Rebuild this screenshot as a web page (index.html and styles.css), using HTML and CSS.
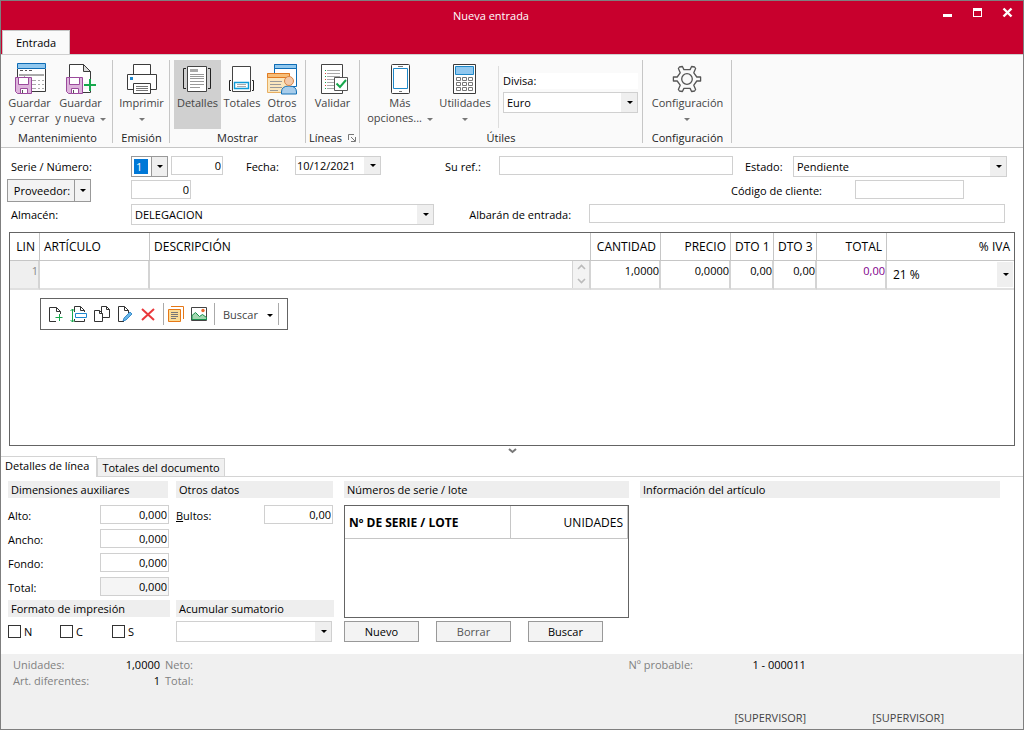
FILE: index.html
```html
<!DOCTYPE html>
<html lang="es">
<head>
<meta charset="utf-8">
<title>Nueva entrada</title>
<link rel="stylesheet" href="styles.css">
</head>
<body>
<div class="window">
  <header class="titlebar">
    <h1 class="title">Nueva entrada</h1>
    <div class="window-buttons">
      <button class="win-btn" aria-label="Minimizar"><svg width="11" height="11"><path d="M1 7h9v3H1z" fill="#fff"/></svg></button>
      <button class="win-btn" aria-label="Maximizar"><svg width="11" height="11" shape-rendering="crispEdges"><path d="M1 1h9v9H1zM2 4v5h7V4z" fill="#fff" fill-rule="evenodd"/></svg></button>
      <button class="win-btn" aria-label="Cerrar"><svg width="11" height="11"><path d="M1.500 1.500l8 8M9.500 1.500l-8 8" stroke="#fff" stroke-width="2.400"/></svg></button>
    </div>
    <button class="ribbon-tab">Entrada</button>
  </header>

  <div class="ribbon">
    <section class="group group-keep">
      <div class="tools">
        <button class="tool">
          <svg class="icon" viewBox="0 0 34 34"><path d="M4.500 8v22.500h28V8" fill="#fff" stroke="#3b3b3b"/><path d="M4.500 2.500h28v5h-28z" fill="#91c8ef" stroke="#0f6cb5"/><path d="M7 9.500h3m2 0h2m2 0h3" stroke="#555"/><path d="M6 13.500h25M6 14.500h25M11.500 13v6M19 19.500h4m2 0h2m2 0h2M19 23.500h4m2 0h2m2 0h2M19 27.500h4m2 0h2m2 0h2" stroke="#aaa"/><path d="M2.500 16.500h16v16h-14l-2-2z" fill="#deb5dc" stroke="#9b4a9c"/><path d="M5.500 16.500h10v7h-10zM7.500 27.500h7v5h-7z" fill="#fff" stroke="#9b4a9c"/><path d="M9.500 29v3" stroke="#555"/></svg>
          <span>Guardar<br>y cerrar</span>
        </button>
        <button class="tool">
          <svg class="icon" viewBox="0 0 34 34"><path d="M5.500 3.500h14l7 7v21h-21z" fill="#fff" stroke="#3b3b3b"/><path d="M19.500 3.500v7h7z" fill="#ddd" stroke="#3b3b3b"/><path d="M2.500 16.500h16v16h-14l-2-2z" fill="#deb5dc" stroke="#9b4a9c"/><path d="M5.500 16.500h10v7h-10zM7.500 27.500h7v5h-7z" fill="#fff" stroke="#9b4a9c"/><path d="M9.500 29v3" stroke="#555"/><path d="M19 21h14v7H19z" fill="#fafafa"/><path d="M20 24h12M26 18v12" stroke="#17a84c" stroke-width="2"/></svg>
          <span>Guardar<br>y nueva <i class="caret"></i></span>
        </button>
      </div>
      <h2 class="group-title">Mantenimiento</h2>
    </section>
    <section class="group group-print">
      <div class="tools">
        <button class="tool">
          <svg class="icon" viewBox="0 0 34 34"><path d="M8.500 3.500h17v11h-17z" fill="#fff" stroke="#3b3b3b"/><path d="M2.500 13.500h29v15h-29z" fill="#fff" stroke="#3b3b3b"/><path d="M5 16h3v3H5z" fill="#1e88d0"/><path d="M8.500 22.500h17v10h-17z" fill="#fff" stroke="#3b3b3b"/><path d="M11 25.500h12M11 27.500h12M11 29.500h12" stroke="#777"/></svg>
          <span>Imprimir<br><i class="caret caret-alone"></i></span>
        </button>
      </div>
      <h2 class="group-title">Emisión</h2>
    </section>
    <section class="group group-show">
      <div class="tools">
        <button class="tool tool-on" aria-pressed="true">
          <svg class="icon" viewBox="0 0 34 34"><path d="M5 7.500H2.500v20H5M27 7.500h2.500v20H27" fill="none" stroke="#222"/><path d="M6.500 5.500h19v25h-19z" fill="#fff" stroke="#444"/><path d="M9 8h8v3H9z" fill="#aaa"/><path d="M9 13.500h14M9 15.500h14M9 17.500h14M9 20.500h14M9 23.500h14M9 26.500h10" stroke="#999"/></svg>
          <span>Detalles</span>
        </button>
        <button class="tool">
          <svg class="icon" viewBox="0 0 34 34"><path d="M7.500 5.500h18v25h-18z" fill="#fff" stroke="#444"/><path d="M6 19.500H4.500v10H6M27 19.500h1.500v10H27" fill="none" stroke="#222"/><path d="M9.500 21.500h14v6h-14z" fill="#fff" stroke="#109bd8" stroke-width="1.400"/><path d="M12 23.500h9M12 25.500h9" stroke="#aaa"/></svg>
          <span>Totales</span>
        </button>
        <button class="tool">
          <svg class="icon" viewBox="0 0 34 34"><path d="M9.500 3.500h22v22h-22z" fill="#fff" stroke="#0f6cb5"/><path d="M9.500 3.500h22v4h-22z" fill="#91c8ef" stroke="#0f6cb5"/><path d="M2.500 12.500h22v19h-22z" fill="#fae6bd" stroke="#e7ae62"/><path d="M2.500 12.500h22v4h-22z" fill="#f7be78" stroke="#e07a22"/><path d="M5 20.500h12M5 23.500h11M5 26.500h12M5 29.500h8" stroke="#999"/><path d="M16.500 33v-2q0-6 7.500-6t7.500 6v2z" fill="#a8cdeb" stroke="#1470b5"/><circle cx="24" cy="20" r="4.500" fill="#f3c9a9" stroke="#d98648"/></svg>
          <span>Otros<br>datos</span>
        </button>
      </div>
      <h2 class="group-title">Mostrar</h2>
    </section>
    <section class="group group-lines">
      <div class="tools">
        <button class="tool">
          <svg class="icon" viewBox="0 0 34 34"><path d="M5.500 3.500h21v29h-21z" fill="#fff" stroke="#444"/><path d="M11 9.500h13M11 12.500h13M11 15.500h13M11 18.500h8M11 21.500h8M11 24.500h8M11 27.500h8" stroke="#aaa"/><path d="M9.500 12v1m0 5v1m0 5v1" stroke="#d43"/><path d="M9.500 9v1m0 5v1m0 5v1m0 5v1" stroke="#17a84c"/><path d="M18.500 16.500h13v13h-13z" fill="#fff" stroke="#555"/><path d="M20.500 22.500l3.500 3.500 6-7" fill="none" stroke="#17a84c" stroke-width="2"/></svg>
          <span>Validar</span>
        </button>
      </div>
      <h2 class="group-title">Líneas <svg class="launcher" viewBox="0 0 8 8"><path d="M.5 6V.5H6M3 3l4 4M7.500 3v4.500H3" fill="none" stroke="#777"/></svg></h2>
    </section>
    <section class="group group-utils">
      <div class="tools">
        <button class="tool">
          <svg class="icon" viewBox="0 0 34 34"><rect x="8.500" y="3.500" width="18" height="29" rx="1" fill="#fff" stroke="#3b3b3b"/><path d="M10.500 7.500h14v20h-14z" fill="#fff" stroke="#1e88c8"/><path d="M15 5.500h5M16 30.500h3" stroke="#777"/></svg>
          <span>Más<br>opciones... <i class="caret"></i></span>
        </button>
        <button class="tool">
          <svg class="icon" viewBox="0 0 34 34"><path d="M5.500 3.500h22v29h-22z" fill="#fff" stroke="#3b3b3b"/><path d="M7.500 5.500h18v8h-18z" fill="#91c8ef" stroke="#1e88c8"/><path d="M8.500 16.500h4v3h-4zM14.500 16.500h4v3h-4zM20.500 16.500h4v3h-4zM8.500 21.500h4v3h-4zM14.500 21.500h4v3h-4zM20.500 21.500h4v3h-4zM8.500 26.500h4v3h-4zM14.500 26.500h4v3h-4zM20.500 26.500h4v3h-4z" fill="none" stroke="#777"/></svg>
          <span>Utilidades<br><i class="caret caret-alone"></i></span>
        </button>
        <div class="currency">
          <label for="divisa">Divisa:</label>
          <span class="combo"><select id="divisa"><option>Euro</option></select></span>
        </div>
      </div>
      <h2 class="group-title">Útiles</h2>
    </section>
    <section class="group group-config">
      <div class="tools">
        <button class="tool">
          <svg class="icon" viewBox="0 0 34 34"><path d="M8.400 7.500 9.400 6 12.400 5.500 13.900 8.600H20.100L21.600 5.500 24.600 6 25.600 7.500 23.800 11.800 26.800 16H30.600V20H26.800L23.800 24.200 25.600 28.500 24.600 30 21.600 30.500 20.100 27.400H13.900L12.400 30.500 9.400 30 8.400 28.500 10.200 24.200 7.200 20H3.400V16H7.200L10.200 11.800Z" fill="none" stroke="#555" stroke-width="1.300" stroke-linejoin="round"/><circle cx="17" cy="18" r="5.300" fill="none" stroke="#555" stroke-width="1.300"/></svg>
          <span>Configuración<br><i class="caret caret-alone"></i></span>
        </button>
      </div>
      <h2 class="group-title">Configuración</h2>
    </section>
  </div>

  <form class="form">
    <div class="row">
      <label class="lead" for="serie">Serie / Número:</label>
      <span class="combo combo-focus serie"><select id="serie"><option>1</option></select><mark class="picked" aria-hidden="true">1</mark></span>
      <input class="field numero" aria-label="Número" value="0">
      <label class="fecha-label" for="fecha">Fecha:</label>
      <span class="combo fecha"><select id="fecha"><option>10/12/2021</option></select></span>
      <label class="ref-label" for="ref">Su ref.:</label>
      <input class="field ref" id="ref">
      <label class="estado-label" for="estado">Estado:</label>
      <span class="combo estado"><select id="estado"><option>Pendiente</option></select></span>
    </div>
    <div class="row">
      <div class="split"><button type="button">Proveedor:</button><button type="button" aria-label="Opciones de proveedor"><i class="caret caret-dark"></i></button></div>
      <input class="field proveedor" aria-label="Proveedor" value="0">
      <label class="cliente-label" for="cliente">Código de cliente:</label>
      <input class="field cliente" id="cliente">
    </div>
    <div class="row">
      <label class="lead" for="almacen">Almacén:</label>
      <span class="combo almacen"><select id="almacen"><option>DELEGACION</option></select></span>
      <label class="albaran-label" for="albaran">Albarán de entrada:</label>
      <input class="field albaran" id="albaran">
    </div>
  </form>

  <main class="lines">
    <table class="grid">
      <colgroup><col class="c-lin"><col class="c-art"><col><col class="c-num"><col class="c-num"><col class="c-dto"><col class="c-dto"><col class="c-num"><col class="c-iva"></colgroup>
      <thead><tr><th class="num">LIN</th><th>ARTÍCULO</th><th>DESCRIPCIÓN</th><th class="num">CANTIDAD</th><th class="num">PRECIO</th><th class="num">DTO 1</th><th class="num">DTO 3</th><th class="num">TOTAL</th><th class="num">% IVA</th></tr></thead>
      <tbody><tr><td class="num line-no">1</td><td></td><td class="desc"><div class="scroller"><svg width="9" height="22" viewBox="0 0 9 22"><path d="M1 6l3.500-3.500L8 6M1 16l3.500 3.500L8 16" fill="none" stroke="#bbb" stroke-width="1.600"/></svg></div></td><td class="num">1,0000</td><td class="num">0,0000</td><td class="num">0,00</td><td class="num">0,00</td><td class="num total">0,00</td><td class="iva"><span class="combo combo-cell"><select aria-label="% IVA"><option>21 %</option></select></span></td></tr></tbody>
    </table>
    <div class="toolbar">
      <button class="mini" aria-label="Nueva línea"><svg viewBox="0 0 18 18"><path d="M13.500 9V6.500l-4-4h-7v14H9" fill="#fff" stroke="#333"/><path d="M9.500 2.500v4h4" fill="none" stroke="#333"/><path d="M8.500 12.500h7M12.500 9v7" stroke="#17a84c"/></svg></button>
      <button class="mini" aria-label="Insertar línea"><svg viewBox="0 0 18 18"><path d="M4.500 7V1.500h6l4 4V7M4.500 14v2.500h10V14" fill="#fff" stroke="#333"/><path d="M10.500 1.500v4h4" fill="none" stroke="#333"/><path d="M5.500 8.500h11v4h-11z" fill="#fff" stroke="#1e88d0"/><path d="M2.500 4v13M.5 6l2-2 2 2M.5 15l2 2 2-2" fill="none" stroke="#17a84c"/></svg></button>
      <button class="mini" aria-label="Duplicar"><svg viewBox="0 0 18 18"><path d="M8.500 1.500h5l3 3v8h-8z" fill="#fff" stroke="#333"/><path d="M13.500 1.500v3h3" fill="none" stroke="#333"/><path d="M1.500 5.500h5l3 3v8h-8z" fill="#fff" stroke="#333"/><path d="M6.500 5.500v3h3" fill="none" stroke="#333"/></svg></button>
      <button class="mini" aria-label="Modificar"><svg viewBox="0 0 18 18"><path d="M12.500 8V5.500l-4-4h-6v15H8" fill="#fff" stroke="#333"/><path d="M8.500 1.500v4h4" fill="none" stroke="#333"/><path d="M7 16l1-3 6-6 2 2-6 6z" fill="#67b5e8" stroke="#1e78c0" stroke-width=".8"/></svg></button>
      <button class="mini" aria-label="Borrar línea"><svg viewBox="0 0 18 18"><path d="M3 4l12 11M15 4L3 15" stroke="#e9383b" stroke-width="2"/></svg></button>
      <i class="divider"></i>
      <button class="mini" aria-label="Notas"><svg viewBox="0 0 18 18"><path d="M4 1.500h12.500V14" fill="none" stroke="#e67817"/><path d="M1.500 4.500h12v12h-12z" fill="#fbdc95" stroke="#e67817"/><path d="M4 7.500h7M4 9.500h7M4 11.500h7M4 13.500h5" stroke="#777"/></svg></button>
      <button class="mini" aria-label="Imagen"><svg viewBox="0 0 18 18"><path d="M1.500 2.500h15v13h-15z" fill="#fff" stroke="#444"/><path d="M2 14.500v-4l3.500-3 4 4 3-2 4 3v2z" fill="#a3d7b1" stroke="#17914c"/><circle cx="13" cy="5.500" r="1.700" fill="#e9682b"/></svg></button>
      <i class="divider"></i>
      <button class="find">Buscar <i class="caret caret-dark"></i></button>
      <i class="divider"></i>
    </div>
  </main>

  <div class="splitter"><svg width="9" height="6" viewBox="0 0 9 6"><path d="M1 1l3.500 3L8 1" fill="none" stroke="#777" stroke-width="2"/></svg></div>

  <nav class="tabs"><button class="tab tab-on">Detalles de línea</button><button class="tab">Totales del documento</button></nav>

  <div class="details">
    <section class="dims">
      <h3 class="caption">Dimensiones auxiliares</h3>
      <div class="rows">
        <label for="alto">Alto:</label><input class="field" id="alto" value="0,000">
        <label for="ancho">Ancho:</label><input class="field" id="ancho" value="0,000">
        <label for="fondo">Fondo:</label><input class="field" id="fondo" value="0,000">
        <label for="tot">Total:</label><input class="field readonly" id="tot" value="0,000" readonly>
      </div>
      <h3 class="caption">Formato de impresión</h3>
      <div class="checks"><label><input type="checkbox">N</label><label><input type="checkbox">C</label><label><input type="checkbox">S</label></div>
    </section>
    <section class="others">
      <h3 class="caption">Otros datos</h3>
      <div class="rows">
        <label for="bultos"><u>B</u>ultos:</label><input class="field" id="bultos" value="0,00">
      </div>
      <h3 class="caption">Acumular sumatorio</h3>
      <span class="combo acumular"><select aria-label="Acumular sumatorio"><option></option></select></span>
    </section>
    <section class="serials">
      <h3 class="caption">Números de serie / lote</h3>
      <div class="serial-box">
        <table class="serial-grid"><thead><tr><th class="strong">Nº DE SERIE / LOTE</th><th class="num units">UNIDADES</th></tr></thead></table>
      </div>
      <div class="actions"><button class="btn">Nuevo</button><button class="btn btn-dim">Borrar</button><button class="btn">Buscar</button></div>
    </section>
    <section class="info"><h3 class="caption">Información del artículo</h3></section>
  </div>

  <footer class="status">
    <dl class="totals">
      <dt>Unidades:</dt><dd>1,0000</dd><dt>Neto:</dt>
      <dt>Art. diferentes:</dt><dd>1</dd><dt>Total:</dt>
    </dl>
    <div class="session">
      <div class="probable"><span>Nº probable:</span><b>1 - 000011</b></div>
      <div class="users"><span>[SUPERVISOR]</span><span>[SUPERVISOR]</span></div>
    </div>
  </footer>
</div>
</body>
</html>
```

FILE: styles.css
```css
* { box-sizing: border-box; }

body { margin: 0; }

body, button, input, select {
  font: 11px/15px "Open Sans", "Noto Sans", sans-serif;
  color: #000;
}

button { border: 0; background: none; padding: 0; }
h1, h2, h3, dl, dd { margin: 0; font-weight: 400; font-size: 11px; }
svg { display: block; }

.window {
  min-height: 100vh;
  display: flex;
  flex-direction: column;
  border: 1px solid #7f7f7f;
  background: #fff;
}

/* Title bar */
.titlebar {
  display: grid;
  grid-template-columns: 1fr auto 1fr;
  grid-template-rows: 29px 24px;
  background: #c8002d;
}
.title { grid-column: 2; color: #fff; line-height: 29px; padding-right: 42px; }
.window-buttons { display: flex; justify-content: flex-end; gap: 19px; padding: 6px 10px 0 0; }
.win-btn { height: 11px; }
.ribbon-tab {
  grid-row: 2;
  grid-column: 1;
  justify-self: start;
  width: 68px;
  background: #fafafa;
  border: 1px solid #c6c6c6;
  border-bottom: 0;
  margin-left: 1px;
}

/* Ribbon */
.ribbon {
  display: flex;
  height: 94px;
  padding: 5px 0 4px;
  background: #fafafa;
  border-top: 1px solid #d0d0d0;
  border-bottom: 1px solid #c6c6c6;
}
.group { display: flex; flex-direction: column; border-right: 1px solid #c6c6c6; }
.group-keep { width: 112px; padding-left: 2px; }
.group-print { width: 57px; padding-left: 1px; }
.group-show { width: 136px; }
.group-lines { width: 54px; }
.group-utils { width: 283px; }
.group-config { width: 89px; padding-left: 1px; }
.tools { display: flex; flex: 1; justify-content: center; }
.tool {
  display: flex;
  flex-direction: column;
  align-items: center;
  padding: 1px 2px 0;
  height: 69px;
  color: #444;
  white-space: nowrap;
}
.tool-on { background: #d0d0d0; }
.icon { width: 34px; height: 34px; }
.group-title {
  display: flex;
  justify-content: center;
  align-items: center;
  gap: 6px;
  line-height: 11px;
  color: #222;
}
.launcher { width: 8px; height: 8px; }
.group-keep .tool { width: 51px; }
.group-keep .tools { justify-content: flex-start; padding-left: 1px; }
.group-show .tool { width: 47px; }
.group-show .tool:nth-child(2) { width: 42px; }
.group-show .tool:nth-child(3) { width: 38px; }
.group-utils .tools { justify-content: flex-start; padding-left: 4px; }
.group-utils .tool { width: 72px; }
.group-utils .tool:nth-child(2) { width: 58px; }
.caret {
  display: inline-block;
  border: 3px solid transparent;
  border-top-color: #777;
  border-bottom: 0;
  vertical-align: middle;
  margin-left: 2px;
}
.caret-alone { margin-left: 0; }
.caret-dark { border-top-color: #000; }
.currency {
  flex: 1;
  display: flex;
  flex-direction: column;
  margin: 6px 4px 4px 4px;
  padding: 7px 0 0 4px;
  border-left: 1px solid #ddd;
}
.currency label { background: #fff; line-height: 16px; margin-bottom: 3px; }

/* Drop-downs and text fields */
.combo { display: grid; height: 21px; grid-template-columns: 1fr 17px; align-items: stretch; }
.combo select {
  grid-area: 1 / 1 / 2 / 3;
  appearance: none;
  min-width: 0;
  width: 100%;
  padding: 0 18px 0 3px;
  border: 1px solid #d0d0d0;
  border-radius: 0;
  background: #fff;
}
.combo::before {
  content: "";
  grid-area: 1 / 2;
  z-index: 1;
  margin: 1px 1px 1px 0;
  background: #efefef;
  pointer-events: none;
}
.combo::after {
  content: "";
  grid-area: 1 / 2;
  z-index: 2;
  place-self: center;
  border: 3px solid transparent;
  border-top-color: #000;
  border-bottom: 0;
  pointer-events: none;
}
.combo-focus select { border-color: #999; }
.combo-focus::before { border-left: 1px solid #999; }
.picked {
  grid-area: 1 / 1;
  z-index: 1;
  margin: 3px 3px 3px 3px;
  background: #0078d7;
  color: #fff;
  padding-left: 2px;
  pointer-events: none;
}
.field {
  height: 19px;
  min-width: 0;
  padding: 0 1px 1px;
  border: 1px solid #d0d0d0;
  background: #fff;
}
.readonly { background: #f5f5f5; }

/* Entry header */
.form { padding: 8px 16px 4px 6px; }
.row { display: flex; height: 24px; padding-left: 4px; }
.row label { line-height: 22px; }
.lead { width: 120px; }
.serie { width: 37px; margin-right: 3px; }
.numero { width: 52px; text-align: right; }
.fecha-label { width: 72px; padding-left: 23px; }
.fecha { width: 86px; height: 19px; }
.fecha select { padding-left: 1px; }
.ref-label { width: 118px; padding-left: 64px; }
.ref { flex: 232; }
.estado-label { width: 60px; padding-left: 12px; }
.estado { flex: 216; }
.split {
  display: flex;
  width: 84px;
  height: 23px;
  margin-right: 40px;
  margin-left: -4px;
  margin-top: -1px;
  border: 1px solid #999;
  background: #f3f3f3;
}
.split button:first-child { flex: 1; padding-left: 2px; border-right: 1px solid #999; }
.split button:last-child { display: grid; place-items: center; width: 15px; }
.split .caret { margin: 0; }
.proveedor { width: 60px; text-align: right; margin-right: auto; }
.cliente-label { width: 124px; }
.cliente { width: 109px; margin-right: 43px; }
.almacen { flex: 305; }
.albaran-label { width: 155px; padding-left: 35px; }
.albaran { flex: 414; margin-right: 2px; }

/* Document lines */
.lines { flex: 1; margin: 0 8px; border: 1px solid #646464; }
.grid { width: 100%; table-layout: fixed; border-collapse: separate; border-spacing: 0; }
.c-lin { width: 30px; }
.c-art { width: 110px; }
.c-num { width: 70px; }
.c-dto { width: 43px; }
.c-iva { width: 127px; }
th, td { text-align: left; font-weight: 400; white-space: nowrap; }
th { font-size: 12px; }
.grid th { height: 28px; padding: 0 4px 1px; border-right: 1px solid #c6c6c6; border-bottom: 1px solid #c6c6c6; }
.grid td {
  height: 29px;
  padding: 2px 0 0;
  vertical-align: top;
  border-right: 2px solid #d4d4d4;
  border-bottom: 2px solid #e0e0e0;
}
.grid th:last-child { border-right: 0; }
.grid .iva { border-right: 0; padding: 0; }
.grid .num, .serial-grid .num { text-align: right; }
.grid .line-no { background: #efefef; color: #888; }
.grid .total { color: #80008b; }
.grid .desc { padding: 0; }
.scroller { width: 17px; height: 27px; margin-left: auto; padding: 2px 4px; background: #f3f3f3; border-left: 1px solid #d4d4d4; }
.combo-cell { height: 27px; }
.combo-cell select { border: 0; padding-left: 6px; font-size: 12px; }
.toolbar {
  display: flex;
  align-items: center;
  width: max-content;
  height: 32px;
  margin: 8px 0 0 30px;
  padding: 0 6px 0 5px;
  border: 1px solid #646464;
  background: #fff;
}
.mini { width: 23px; padding-left: 1px; }
.mini svg { width: 18px; height: 18px; }
.divider { width: 1px; height: 22px; margin: 0 2px; background: #aaa; }
.find { padding: 0 3px 0 6px; color: #444; }
.find .caret { margin: 0 0 0 6px; }

/* Lower panel */
.splitter { display: flex; justify-content: center; height: 10px; padding-top: 2px; }
.tabs { display: flex; align-items: flex-end; height: 21px; border-bottom: 1px solid #d4d4d4; }
.tab { height: 18px; padding: 0 4px; border: 1px solid #d4d4d4; border-bottom: 0; background: #f0f0f0; }
.tab-on { height: 21px; margin-bottom: -1px; padding: 0 7px 3px 4px; background: #fff; border-left: 0; }
.details {
  display: grid;
  grid-template-columns: 162px 158px 289px minmax(0, 1fr);
  column-gap: 6px;
  padding: 4px 23px 12px 7px;
}
.caption { height: 17px; padding-left: 3px; background: #eee; line-height: 18px; }
.dims .caption:first-child { margin-right: 2px; }
.others .caption:first-child { margin-right: 1px; }
.rows {
  display: grid;
  grid-template-columns: 1fr 69px;
  grid-auto-rows: 19px;
  row-gap: 5px;
  height: 102px;
  padding: 7px 1px 0 0;
}
.rows label { line-height: 22px; }
.rows .field { text-align: right; }
.checks { display: flex; margin-top: 8px; }
.checks label { display: flex; width: 52px; gap: 3px; line-height: 13px; }
.checks input { appearance: none; width: 13px; height: 13px; margin: 0; border: 1px solid #333; background: #fff; }
.acumular { width: 156px; margin-top: 4px; }
.serials { margin-left: 4px; }
.serial-box { height: 113px; margin: 7px 0 3px; border: 1px solid #646464; }
.serial-grid { width: 100%; border-spacing: 0; }
.serial-grid th { height: 33px; padding: 0 4px; border-right: 1px solid #c6c6c6; border-bottom: 1px solid #c6c6c6; }
.serial-grid .strong { font-weight: 700; }
.units { width: 117px; }
.actions { display: flex; gap: 17px; }
.btn { width: 75px; height: 21px; border: 1px solid #999; background: #f3f3f3; }
.btn-dim { color: #555; }
.info { margin-left: 5px; }

/* Status area */
.status { display: flex; justify-content: space-between; height: 75px; padding: 3px 79px 4px 12px; background: #f0f0f0; color: #808080; }
.totals { display: grid; grid-template-columns: 92px 55px auto; grid-auto-rows: 16px; }
.totals dd { color: #000; text-align: right; }
.totals dt:nth-of-type(even) { padding-left: 5px; }
.session { display: flex; flex-direction: column; justify-content: space-between; }
.probable { display: flex; }
.probable span { width: 124px; }
.probable b { font-weight: 400; color: #000; }
.users { display: flex; gap: 66px; padding-left: 106px; color: #444; }
```
